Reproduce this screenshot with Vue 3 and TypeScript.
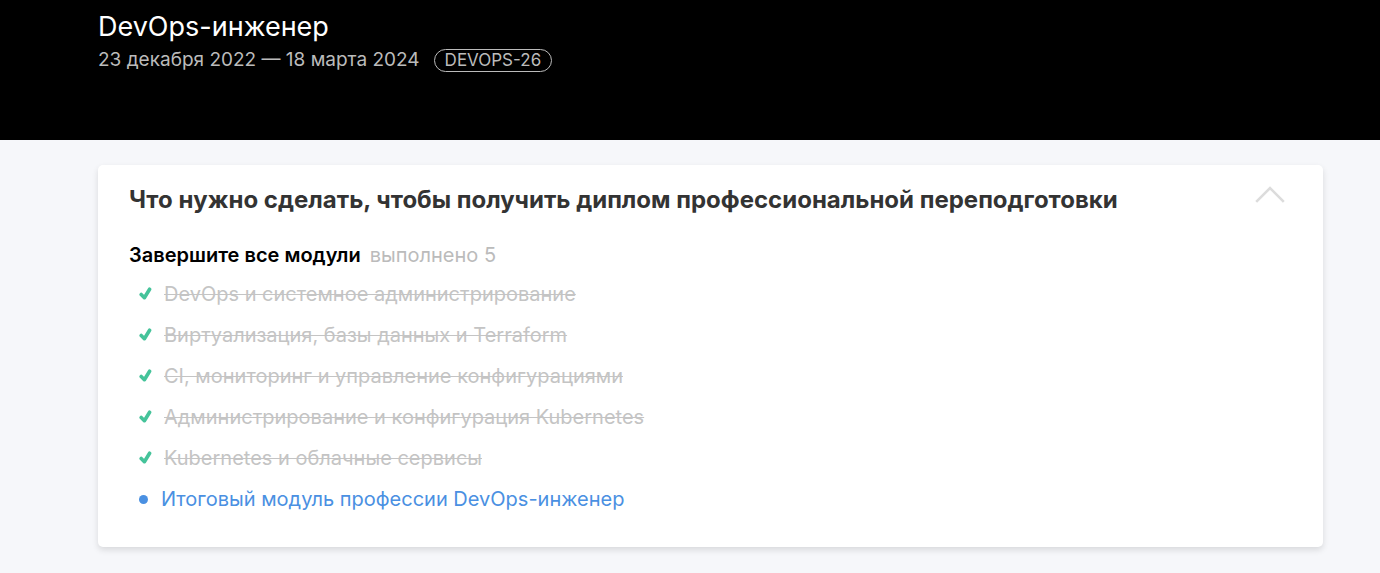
<script setup lang="ts">
import { ref } from 'vue'

interface Module {
  title: string
  done: boolean
}

const open = ref(true)
const modules: Module[] = [
  { title: 'DevOps и системное администрирование', done: true },
  { title: 'Виртуализация, базы данных и Terraform', done: true },
  { title: 'CI, мониторинг и управление конфигурациями', done: true },
  { title: 'Администрирование и конфигурация Kubernetes', done: true },
  { title: 'Kubernetes и облачные сервисы', done: true },
  { title: 'Итоговый модуль профессии DevOps-инженер', done: false },
]
const doneCount = modules.filter((m) => m.done).length
</script>

<template>
  <div class="page">
    <header class="hero">
      <h1>DevOps-инженер</h1>
      <p class="meta">
        <span>23 декабря 2022 — 18 марта 2024</span>
        <span class="badge">DEVOPS-26</span>
      </p>
    </header>
    <main>
      <section class="card">
        <div class="head">
          <h2>Что нужно сделать, чтобы получить диплом профессиональной переподготовки</h2>
          <button class="toggle" type="button" aria-label="Свернуть" :aria-expanded="open" @click="open = !open">
            <svg width="30" height="18" viewBox="0 0 30 18" fill="none" stroke="#dcdcdc" stroke-width="2.6">
              <path d="M1.2 16.8 15 3 28.8 16.8" />
            </svg>
          </button>
        </div>
        <div v-if="open">
          <h3>Завершите все модули <span class="count">выполнено {{ doneCount }}</span></h3>
          <ul>
            <li v-for="m in modules" :key="m.title" :class="{ done: m.done }">
              <template v-if="m.done">
                <svg class="check" width="14" height="14" viewBox="0 0 14 14" fill="none" stroke="#45c39a" stroke-width="3.6" stroke-linecap="round" stroke-linejoin="round">
                  <path d="M2.2 7.5 5.4 10.7 10.6 2.2" />
                </svg>
                <span>{{ m.title }}</span>
              </template>
              <template v-else>
                <span class="dot"></span>
                <a href="#">{{ m.title }}</a>
              </template>
            </li>
          </ul>
        </div>
      </section>
    </main>
  </div>
</template>

<style>
body {
  background: #f6f7fa;
}
</style>

<style scoped>
.page {
  font-family: Inter, "Liberation Sans", sans-serif;
  font-size: 20px;
}
.hero {
  box-sizing: border-box;
  min-height: 140px;
  padding: 10px 98px 0;
  background: #000;
}
h1 {
  margin: 0;
  color: #fff;
  font-size: 27px;
  font-weight: 400;
  line-height: 34px;
}
.meta {
  display: flex;
  align-items: center;
  gap: 14px;
  margin: 4px 0 0;
  color: #bbb;
  font-size: 19px;
  line-height: 24px;
}
.badge {
  padding: 0 10px;
  border: 1px solid #bbb;
  border-radius: 12px;
  font-size: 17px;
  line-height: 21px;
}
main {
  padding: 25px 57px 26px 98px;
}
.card {
  padding: 20px 31px 27px;
  border-radius: 5px;
  background: #fff;
  box-shadow: 0 3px 6px rgba(0, 0, 0, 0.12);
}
.head {
  display: flex;
  justify-content: space-between;
}
h2 {
  margin: 0;
  color: #333;
  font-size: 24px;
  font-weight: 700;
  line-height: 30px;
}
.toggle {
  align-self: flex-start;
  margin-right: 7px;
  padding: 0;
  border: 0;
  background: none;
  cursor: pointer;
}
.toggle svg {
  display: block;
}
h3 {
  margin: 28px 0 7px;
  font-size: 20px;
  font-weight: 600;
  line-height: 24px;
}
.count {
  margin-left: 4px;
  color: #bbb;
  font-weight: 400;
}
ul {
  margin: 0;
  padding: 0 0 0 10px;
  list-style: none;
}
li {
  display: flex;
  align-items: center;
  line-height: 41px;
}
.done {
  color: #c4c4c4;
}
.done span {
  text-decoration: line-through;
  text-decoration-thickness: 1px;
}
.check {
  margin: 0 11px 2px 0;
}
.dot {
  width: 9px;
  height: 9px;
  margin-right: 13px;
  border-radius: 50%;
  background: #4a90e2;
}
a {
  color: #4a90e2;
  text-decoration: none;
}
</style>
